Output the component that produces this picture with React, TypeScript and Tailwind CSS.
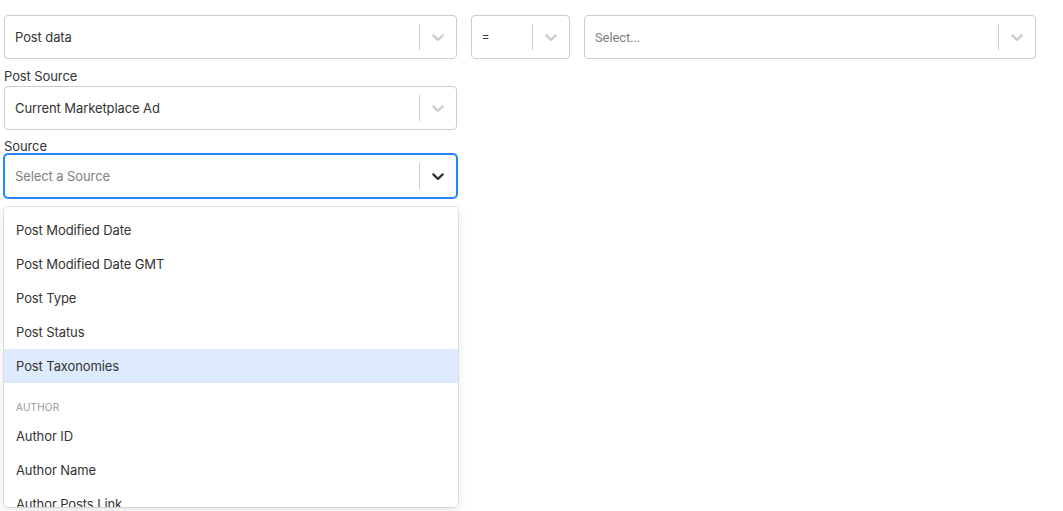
import { ReactNode } from "react";

function Chevron({ dark }: { dark?: boolean }) {
  return (
    <svg viewBox="0 0 20 20" width="20" height="20" className={dark ? "fill-[#333333]" : "fill-[#cccccc]"}>
      <path d="M4.516 7.548c0.436-0.446 1.043-0.481 1.576 0l3.908 3.747 3.908-3.747c0.533-0.481 1.141-0.446 1.574 0 0.436 0.445 0.408 1.197 0 1.615-0.406 0.418-4.695 4.502-4.695 4.502-0.217 0.223-0.502 0.335-0.787 0.335s-0.57-0.112-0.789-0.335c0 0-4.287-4.084-4.695-4.502s-0.436-1.17 0-1.615z" />
    </svg>
  );
}

interface SelectBoxProps {
  width: string;
  children: ReactNode;
  focused?: boolean;
}

function SelectBox({ width, children, focused }: SelectBoxProps) {
  return (
    <div
      className={`${width} h-[44px] flex items-center rounded-[4px] bg-white border ${
        focused ? "border-[#2684ff] shadow-[0_0_0_1px_#2684ff]" : "border-[#cccccc]"
      }`}
    >
      <div className="flex-1 min-w-0 px-[10px] pt-[2px] truncate">{children}</div>
      <span className="w-px h-[26px] bg-[#cccccc]" />
      <span className="w-[36px] flex justify-center">
        <Chevron dark={focused} />
      </span>
    </div>
  );
}

const postOptions = ["Post Modified Date", "Post Modified Date GMT", "Post Type", "Post Status", "Post Taxonomies"];
const authorOptions = ["Author ID", "Author Name", "Author Posts Link"];

export default function App() {
  return (
    <div className="min-h-screen bg-white px-[4px] pt-[15px] text-[13px] tracking-[-0.1px] text-[#333333] font-['Inter','Liberation_Sans',sans-serif]">
      <div className="flex gap-[14px]">
        <SelectBox width="w-[453px]">Post data</SelectBox>
        <SelectBox width="w-[99px]">
          <span className="font-['Roboto',sans-serif] text-[#333333]">=</span>
        </SelectBox>
        <SelectBox width="w-[452px]">
          <span className="font-['Roboto',sans-serif] text-[#808080]">Select...</span>
        </SelectBox>
      </div>

      <div className="w-[453px]">
        <div className="mt-[9px] mb-[2px] leading-[16px]">Post Source</div>
        <SelectBox width="w-[453px]">Current Marketplace Ad</SelectBox>

        <div className="mt-[8px] leading-[16px]">Source</div>
        <SelectBox width="w-[453px]" focused>
          <span className="text-[#808080]">Select a Source</span>
        </SelectBox>

        <div className="mt-[9px] w-[454px] h-[300px] overflow-hidden rounded-[4px] bg-white shadow-[0_0_0_1px_rgba(0,0,0,0.1),0_4px_11px_rgba(0,0,0,0.1)]">
          <div className="pt-[6px]">
            {postOptions.map((o) => (
              <div
                key={o}
                className={`h-[34px] flex items-center px-[12px] pt-[2px] ${o === "Post Taxonomies" ? "bg-[#deebff]" : ""}`}
              >
                {o}
              </div>
            ))}
            <div className="pt-[18px] pb-[6px] px-[12px] text-[10px] leading-[12px] uppercase text-[#999999] tracking-[0.2px]">
              Author
            </div>
            {authorOptions.map((o) => (
              <div key={o} className="h-[34px] flex items-center px-[12px] pt-[2px]">
                {o}
              </div>
            ))}
          </div>
        </div>
      </div>
    </div>
  );
}
